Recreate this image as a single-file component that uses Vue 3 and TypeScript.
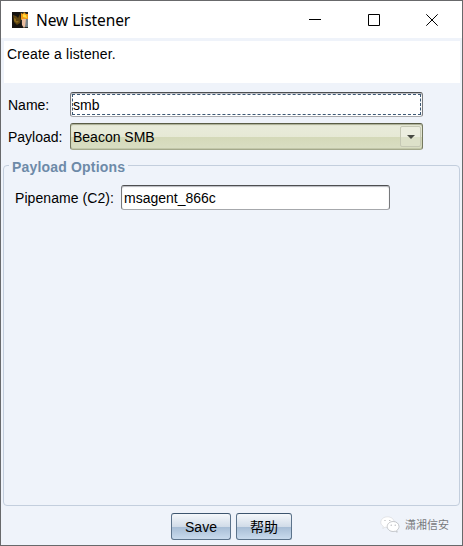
<script setup lang="ts">
import { ref } from 'vue'

const name = ref('smb')
const payload = ref('Beacon SMB')
const pipename = ref('msagent_866c')
</script>

<template>
  <div class="window">
    <header class="titlebar">
      <svg class="app-icon" viewBox="0 0 16 16" width="16" height="16">
        <rect width="16" height="16" fill="#15120f" />
        <path d="M1 3l3 1 2 2 2-4 1 5-1 4-3 2-3-3z" fill="#5c4310" />
        <path d="M2 6l2 1v2l3 0-2 2-3-2z" fill="#8a681a" />
        <path d="M8 0h8v16h-5l-2-5z" fill="#252824" />
        <path d="M9 1l2 1 1-2 2 2 2 0v7l-3-2-4 1z" fill="#f09a18" />
        <path d="M11 2l3 1 1 3-4-1z" fill="#ffe03c" />
        <path d="M10 7h4l1 5-3 4-2-3z" fill="#e9bda0" />
        <path d="M14 7h2v8h-3z" fill="#77848b" />
      </svg>
      <h1 class="title">New Listener</h1>
      <nav class="controls">
        <svg viewBox="0 0 12 12" width="12" height="12"><path d="M0 5.5h12" /></svg>
        <svg viewBox="0 0 12 12" width="12" height="12"><path d="M.5.5h11v11H.5z" /></svg>
        <svg viewBox="0 0 12 12" width="12" height="12"><path d="M.3.3l11.4 11.4M11.7.3L.3 11.7" /></svg>
      </nav>
    </header>

    <p class="description">Create a listener.</p>

    <div class="form">
      <label>Name:</label>
      <div class="field focused"><span>{{ name }}</span></div>
      <label>Payload:</label>
      <div class="combo">
        <span>{{ payload }}</span>
        <i class="drop">
          <svg viewBox="0 0 8 4" width="8" height="4"><path d="M0 0h8L4 4z" /></svg>
        </i>
      </div>
    </div>

    <fieldset class="options">
      <legend>Payload Options</legend>
      <label>Pipename (C2):</label>
      <div class="field"><span>{{ pipename }}</span></div>
    </fieldset>

    <footer class="actions">
      <button class="save" type="button">Save</button>
      <button class="help" type="button">帮助</button>
    </footer>

    <div class="watermark">
      <svg viewBox="0 0 20 17" width="20" height="17">
        <path class="bubble" d="M7.5.8C3.8.8.8 3.2.8 6.2c0 1.8 1 3.2 2.6 4.2l-.6 2 2.4-1.2 2.3.4c3.7 0 6.7-2.4 6.7-5.4S11.2.8 7.5.8z" />
        <path class="bubble edge" d="M13.2 5.500c-3.300 0-6 2.200-6 5s2.700 5 6 5l2-.3 2 1-.5-1.800c1.400-.9 2.300-2.300 2.300-3.900 0-2.800-2.500-5-5.800-5z" />
        <g class="eyes">
          <circle cx="5" cy="4.5" r=".6" /><circle cx="9.800" cy="4.5" r=".6" />
          <circle cx="11.2" cy="9.200" r=".6" /><circle cx="15.200" cy="9.200" r=".6" />
        </g>
      </svg>
      <span>潇湘信安</span>
    </div>
  </div>
</template>

<style>
body {
  margin: 0;
  background: #eff3fa;
}
</style>

<style scoped>
.window {
  position: relative;
  box-sizing: border-box;
  width: 463px;
  height: 546px;
  display: flex;
  flex-direction: column;
  border: 1px solid #68696b;
  background: #eff3fa;
  color: #000;
  font: 14px/16px "Liberation Sans", "Noto Sans CJK SC", sans-serif;
}
.titlebar {
  flex: none;
  height: 37px;
  display: flex;
  align-items: center;
  padding: 0 24px 0 11px;
  background: #fff;
}
.title {
  flex: 1;
  margin: 0 0 0 8px;
  font: 400 15.5px/20px "Noto Sans", sans-serif;
  letter-spacing: -0.07px;
}
.controls {
  display: flex;
  gap: 46.5px;
}
.controls path {
  fill: none;
  stroke: #000;
  stroke-width: 1;
}
.description {
  flex: none;
  box-sizing: border-box;
  height: 42px;
  margin: 3px 2px 0 3px;
  padding: 5px 3px;
  background: #fff;
  letter-spacing: 0.17px;
}
.form {
  display: grid;
  grid-template-columns: 57px 353px;
  grid-template-rows: 25px 27px;
  column-gap: 5px;
  row-gap: 6px;
  align-items: center;
  margin: 9px 0 0 7px;
}
.field,
.combo {
  box-sizing: border-box;
  display: flex;
  align-items: center;
  border: 1px solid;
  border-color: #4d4e50 #77797c #a6a8ac #77797c;
  border-radius: 3px;
}
.field {
  height: 25px;
  padding: 1px 2px 0;
  background: #fff;
  box-shadow: inset 0 1px 1px #b8babf;
}
.focused {
  padding: 0;
}
.focused span {
  flex: 1;
  box-sizing: border-box;
  height: 21px;
  margin: 0 1px;
  padding: 2px 0 0 0;
  border: 1px dashed #3c5874;
}
.combo {
  height: 27px;
  padding: 0 1px 0 2px;
  border-color: #595c46 #74785f #a4a98c #74785f;
  box-shadow: inset 0 1px 1px #a9ad93, inset 0 -1px 0 #c3c8aa;
  background: linear-gradient(#e9ecdc 0, #e6e9d5 52%, #d4d9b9 53%, #d9dec3 100%);
}
.combo span {
  flex: 1;
}
.drop {
  box-sizing: border-box;
  width: 21px;
  height: 21px;
  display: flex;
  align-items: center;
  justify-content: center;
  border: 1px solid #c5c8b4;
  border-radius: 2px;
  background: linear-gradient(#eceee0 50%, #dde1c9 51%);
}
.drop path {
  fill: #484a43;
}
.options {
  box-sizing: border-box;
  width: 457px;
  height: 347px;
  margin: 9px 0 0 2px;
  padding: 13px 0 0 11px;
  min-width: 0;
  display: flex;
  align-items: flex-start;
  gap: 7px;
  border: 1px solid #c3cedd;
  border-radius: 4px;
}
.options legend {
  height: 13px;
  margin-left: -6px;
  padding: 0 3px;
  color: #6d8aa8;
  font-weight: 700;
  letter-spacing: 0.18px;
}
.options label {
  padding-top: 5px;
  letter-spacing: 0.07px;
}
.options .field {
  width: 269px;
}
.actions {
  display: flex;
  gap: 5px;
  margin: 7px 0 0 170px;
}
button {
  box-sizing: border-box;
  height: 27px;
  padding: 1px 0 0;
  border: 1px solid #5c738b;
  border-top-color: #3d556e;
  border-radius: 3px;
  background: linear-gradient(#f5f8fb 0, #d0dbe8 52%, #a8bed6 54%, #c9dbed 100%);
  color: #000;
  font: inherit;
}
.save {
  width: 60px;
}
.help {
  width: 56px;
}
.watermark {
  position: absolute;
  left: 379px;
  top: 515px;
  display: flex;
  align-items: center;
  gap: 5px;
  color: #77797c;
  font-size: 11px;
}
.bubble {
  fill: #fff;
  stroke: #d3d5d9;
  stroke-width: 0.6;
}
.edge {
  stroke: #a1a4a9;
}
.eyes {
  fill: #a5a7ab;
}
</style>
